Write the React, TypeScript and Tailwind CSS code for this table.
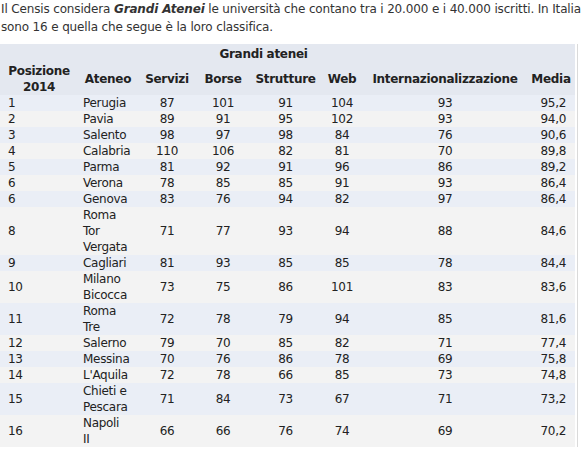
const rows: [string, string[], number, number, number, number, number, string][] = [
  ["1", ["Perugia"], 87, 101, 91, 104, 93, "95,2"],
  ["2", ["Pavia"], 89, 91, 95, 102, 93, "94,0"],
  ["3", ["Salento"], 98, 97, 98, 84, 76, "90,6"],
  ["4", ["Calabria"], 110, 106, 82, 81, 70, "89,8"],
  ["5", ["Parma"], 81, 92, 91, 96, 86, "89,2"],
  ["6", ["Verona"], 78, 85, 85, 91, 93, "86,4"],
  ["6", ["Genova"], 83, 76, 94, 82, 97, "86,4"],
  ["8", ["Roma", "Tor", "Vergata"], 71, 77, 93, 94, 88, "84,6"],
  ["9", ["Cagliari"], 81, 93, 85, 85, 78, "84,4"],
  ["10", ["Milano", "Bicocca"], 73, 75, 86, 101, 83, "83,6"],
  ["11", ["Roma", "Tre"], 72, 78, 79, 94, 85, "81,6"],
  ["12", ["Salerno"], 79, 70, 85, 82, 71, "77,4"],
  ["13", ["Messina"], 70, 76, 86, 78, 69, "75,8"],
  ["14", ["L'Aquila"], 72, 78, 66, 85, 73, "74,8"],
  ["15", ["Chieti e", "Pescara"], 71, 84, 73, 67, 71, "73,2"],
  ["16", ["Napoli", "II"], 66, 66, 76, 74, 69, "70,2"],
];

export default function App() {
  return (
    <div className="w-[582px] bg-white text-[12px] tracking-[-0.3px] text-[#333] font-['DejaVu_Sans',sans-serif]">
      <p className="leading-[18px] pl-[1px] tracking-[-0.15px]">
        Il Censis considera <b className="italic">Grandi Atenei</b> le università che contano tra i 20.000 e i 40.000 iscritti. In Italia
        sono 16 e quella che segue è la loro classifica.
      </p>

      <div className="mt-[8px] w-[578px] border-r border-[#dadada]">
        <table className="table-fixed w-[575px] border-collapse leading-[16px] text-[#222]">
          <colgroup>
            <col className="w-[78px]" />
            <col className="w-[60px]" />
            <col className="w-[58px]" />
            <col className="w-[54px]" />
            <col className="w-[71px]" />
            <col className="w-[42px]" />
            <col className="w-[164px]" />
            <col className="w-[48px]" />
          </colgroup>
          <thead className="bg-[#e4e8f0] font-bold">
            <tr className="h-[19px]">
              <th colSpan={7} className="text-center font-bold">Grandi atenei</th>
              <th></th>
            </tr>
            <tr className="h-[32px]">
              <th className="text-center">Posizione<br />2014</th>
              <th className="text-center">Ateneo</th>
              <th className="text-center">Servizi</th>
              <th className="text-center">Borse</th>
              <th className="text-center">Strutture</th>
              <th className="text-center">Web</th>
              <th className="text-center">Internazionalizzazione</th>
              <th className="text-center">Media</th>
            </tr>
          </thead>
          <tbody>
            {rows.map((r, i) => (
              <tr key={i} className={i % 2 === 0 ? "bg-[#eaeef6]" : "bg-[#f3f3f3]"}>
                <td className="pl-[8px]">{r[0]}</td>
                <td className="pl-[5px]">
                  {r[1].map((l, j) => (
                    <div key={j}>{l}</div>
                  ))}
                </td>
                <td className="text-center">{r[2]}</td>
                <td className="text-center">{r[3]}</td>
                <td className="text-center">{r[4]}</td>
                <td className="text-center">{r[5]}</td>
                <td className="text-center">{r[6]}</td>
                <td className="text-right pr-[9px]">{r[7]}</td>
              </tr>
            ))}
          </tbody>
        </table>
      </div>
    </div>
  );
}
